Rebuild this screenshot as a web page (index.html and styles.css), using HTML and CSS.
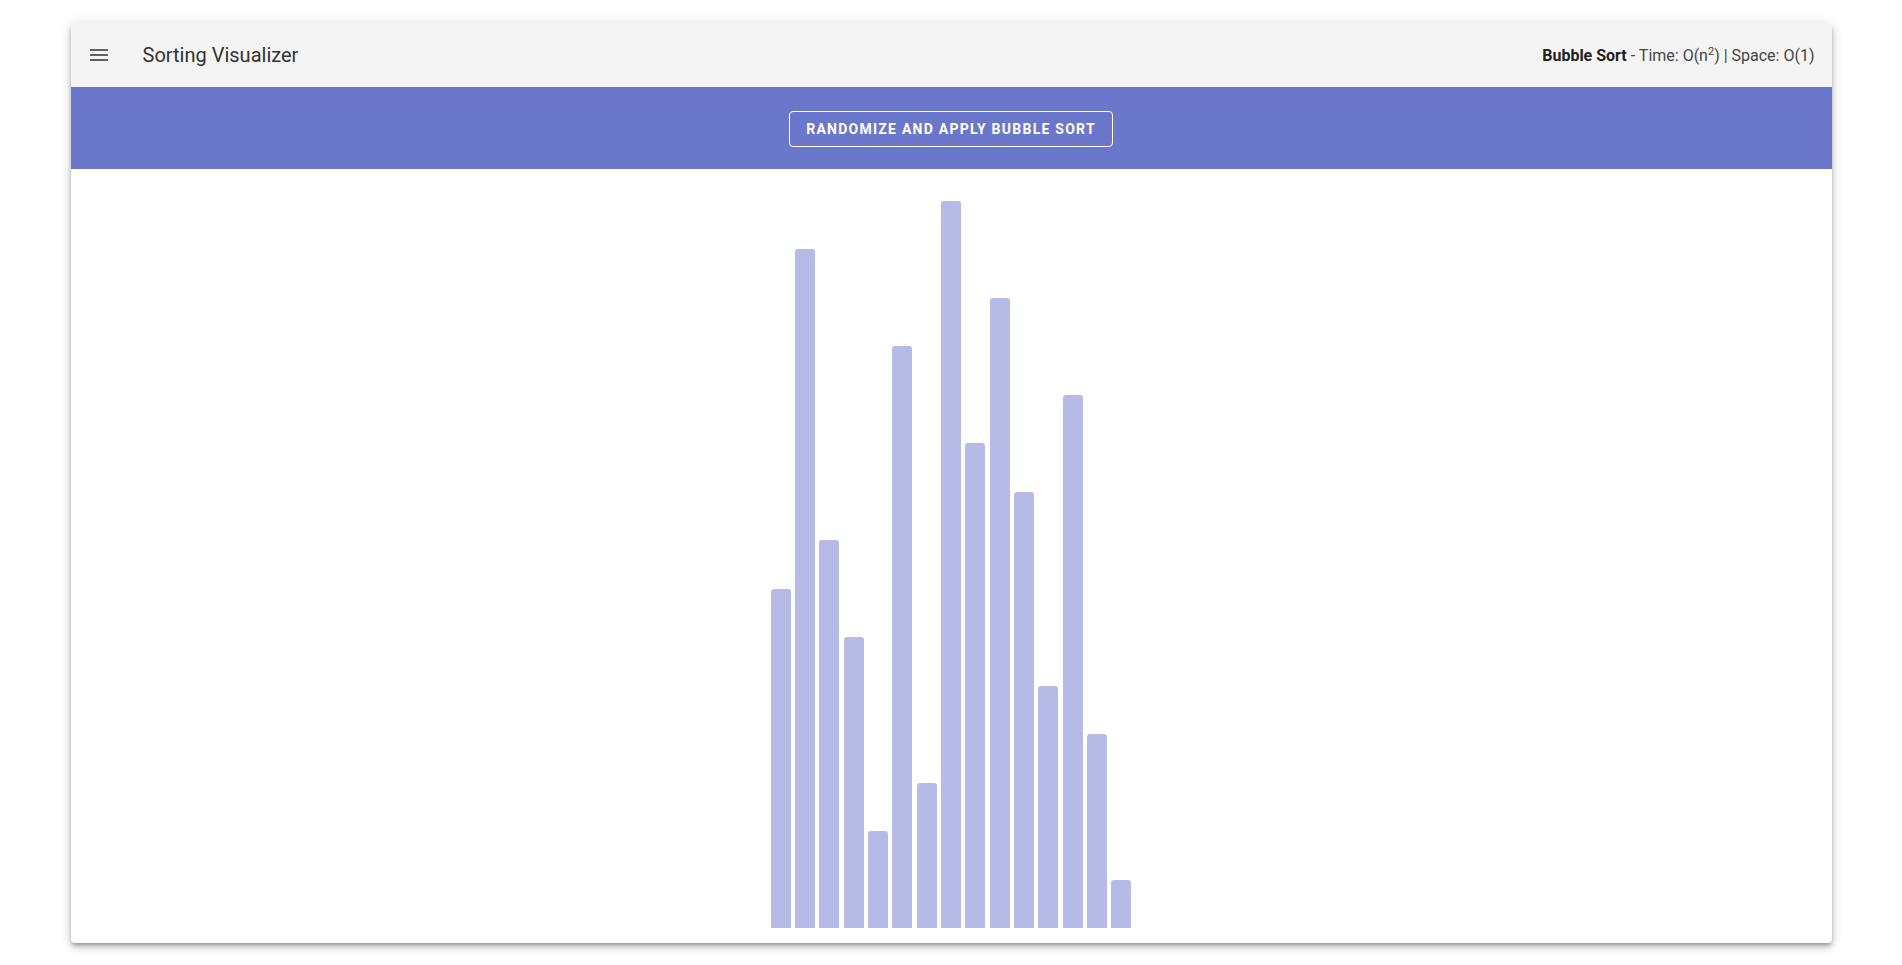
FILE: index.html
```html
<!DOCTYPE html>
<html lang="en">
<head>
    <meta charset="UTF-8" />
    <title>Sorting Visualizer</title>
    <link rel="stylesheet" href="styles.css">
</head>
<body>
<div class="card">
  <header class="toolbar">
    <button class="menu-btn" aria-label="menu">
      <svg width="24" height="24" viewBox="0 0 24 24"><path d="M3 18h18v-2H3v2zm0-5h18v-2H3v2zm0-7v2h18V6H3z" fill="#616161"/></svg>
    </button>
    <span class="title">Sorting Visualizer</span>
    <span class="info"><b>Bubble Sort</b> - Time: O(n<sup>2</sup>) | Space: O(1)</span>
  </header>

  <div class="actions">
    <button class="outline-btn">Randomize and apply Bubble Sort</button>
  </div>

  <!-- столбики массива -->
  <div class="chart" id="chart"></div>
</div>

<script>
const values = [7, 14, 8, 6, 2, 12, 3, 15, 10, 13, 9, 5, 11, 4, 1];
const chart = document.getElementById('chart');
values.forEach(function(v) {
  const bar = document.createElement('div');
  bar.className = 'bar';
  bar.style.height = Math.round(v * 48.47) + 'px';
  chart.appendChild(bar);
});
</script>
</body>
</html>
```

FILE: styles.css
```css
body {
    margin: 0;
    padding: 23px 0 22px;
    background-color: #ffffff;
    font-family: Roboto, "Liberation Sans", sans-serif;
    color: rgba(0, 0, 0, 0.87);
}
.card {
    width: 1761px;
    margin: 0 auto;
    background-color: #fff;
    border-radius: 4px;
    overflow: hidden;
    box-shadow: 0 3px 4px -1px rgba(0,0,0,.32), 0 5px 8px 0 rgba(0,0,0,.12), 0 1px 14px 0 rgba(0,0,0,.12);
}
.toolbar {
    height: 64px;
    display: flex;
    align-items: center;
    padding: 0 17px 0 16px;
    background-color: #f4f4f4;
}
.menu-btn {
    border: none;
    background: none;
    padding: 0;
    width: 24px;
    height: 24px;
    display: flex;
}
.title {
    margin-left: 32px;
    font-size: 20px;
    color: #333;
}
.info {
    margin-left: auto;
    font-size: 16px;
    color: #444;
}
.info b {
    color: #222;
}
.info sup {
    font-size: 11px;
    line-height: 0;
}
.actions {
    display: flex;
    justify-content: center;
    padding: 24px 0 22px;
    background-color: #6b77cb;
}
.outline-btn {
    height: 36px;
    padding: 0 16px;
    border: 1px solid #fff;
    border-radius: 4px;
    background: transparent;
    color: #fff;
    font-family: Roboto, "Liberation Sans", sans-serif;
    font-size: 14px;
    font-weight: bold;
    letter-spacing: 1.25px;
    text-transform: uppercase;
}
.chart {
    height: 727px;
    padding: 32px 0 15px;
    display: flex;
    justify-content: center;
    align-items: flex-end;
    gap: 4.35px;
}
.bar {
    width: 20px;
    background-color: #b6bae6;
    border-radius: 3px 3px 0 0;
}
```
